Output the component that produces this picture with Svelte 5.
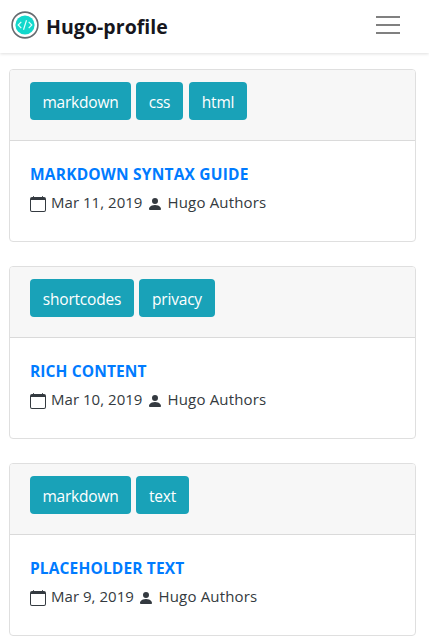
<script>
  const posts = [
    {
      title: 'MARKDOWN SYNTAX GUIDE',
      titleSpacing: 0.2,
      date: 'Mar 11, 2019',
      dateWidth: 92,
      tags: [['markdown', 101], ['css', 47], ['html', 58]]
    },
    {
      title: 'RICH CONTENT',
      titleSpacing: 0.12,
      date: 'Mar 10, 2019',
      dateWidth: 92,
      tags: [['shortcodes', 104], ['privacy', 76]]
    },
    {
      title: 'PLACEHOLDER TEXT',
      titleSpacing: 0.14,
      date: 'Mar 9, 2019',
      dateWidth: 83,
      tags: [['markdown', 101], ['text', 53]]
    }
  ];
</script>

<nav>
  <a class="brand" href="#home">
    <svg width="28" height="28" viewBox="0 0 28 28" aria-hidden="true">
      <circle cx="14" cy="14" r="12.9" fill="#fff" stroke="#666b70" stroke-width="1.6" />
      <circle cx="14" cy="14" r="9.6" fill="#12d8cc" />
      <path d="M10.3 10.9 7.2 14l3.1 3.1M17.7 10.9l3.1 3.1-3.1 3.1M15.5 9.2l-3 9.6" fill="none" stroke="#e4fffc" stroke-width="1.2" />
    </svg>
    <span>Hugo-profile</span>
  </a>
  <button class="toggler" aria-label="Menu"><i></i><i></i><i></i></button>
</nav>

<main>
  {#each posts as post}
    <article>
      <header>
        {#each post.tags as [name, width]}
          <a class="tag" href="#tag" style:width="{width}px">{name}</a>
        {/each}
      </header>
      <section>
        <h2 style:letter-spacing="{post.titleSpacing}px">{post.title}</h2>
        <p>
          <svg class="cal" width="16" height="16" viewBox="0 0 16 16" fill="#343a40" aria-hidden="true">
            <path d="M3.5 0a.5.5 0 0 1 .5.5V1h8V.5a.5.5 0 0 1 1 0V1h1a2 2 0 0 1 2 2v11a2 2 0 0 1-2 2H2a2 2 0 0 1-2-2V3a2 2 0 0 1 2-2h1V.5a.5.5 0 0 1 .5-.5zM1 4v10a1 1 0 0 0 1 1h12a1 1 0 0 0 1-1V4H1z" />
          </svg>
          <span class="date" style:width="{post.dateWidth}px">{post.date}</span>
          <svg class="user" width="16" height="16" viewBox="0 0 16 16" fill="#343a40" aria-hidden="true">
            <path d="M3 14s-1 0-1-1 1-4 6-4 6 3 6 4-1 1-1 1H3zm5-6a3 3 0 1 0 0-6 3 3 0 0 0 0 6z" />
          </svg>
          <span class="author">Hugo Authors</span>
        </p>
      </section>
    </article>
  {/each}
</main>

<style>
  :global(body) {
    background: #fff;
    font-family: 'Segoe UI', 'Open Sans', 'Noto Sans', sans-serif;
    overflow: hidden;
  }
  nav {
    box-sizing: border-box;
    height: 53px;
    padding: 0 29px 2px 11px;
    display: flex;
    align-items: center;
    justify-content: space-between;
    box-shadow: 0 1px 3px rgba(0, 0, 0, 0.13);
  }
  .brand {
    display: flex;
    align-items: center;
    gap: 7px;
    color: #16161d;
    text-decoration: none;
    font-size: 19.5px;
    line-height: 28px;
    font-weight: 700;
    white-space: nowrap;
  }
  .brand svg {
    margin-bottom: 1px;
  }
  .brand span {
    padding-top: 3px;
    letter-spacing: 0.05px;
  }
  .toggler {
    width: 24px;
    margin-bottom: 1px;
    padding: 0;
    border: 0;
    background: none;
    display: flex;
    flex-direction: column;
    gap: 6px;
  }
  .toggler i {
    height: 2px;
    background: #808080;
  }
  main {
    padding: 16px 13px 0 9px;
    display: flex;
    flex-direction: column;
    gap: 24px;
  }
  article {
    box-sizing: border-box;
    height: 173px;
    border: 1px solid #dfdfdf;
    border-radius: 4px;
    overflow: hidden;
  }
  header {
    box-sizing: border-box;
    height: 71px;
    padding: 12px 20px;
    display: flex;
    gap: 5px;
    background: #f7f7f7;
    border-bottom: 1px solid #dadada;
  }
  .tag {
    height: 38px;
    line-height: 40px;
    border-radius: 4px;
    background: #19a2b8;
    color: #fff;
    font-size: 15.5px;
    letter-spacing: -0.2px;
    text-align: center;
    text-decoration: none;
  }
  .tag:nth-child(3) {
    margin-left: 1px;
  }
  section {
    padding: 21px 20px 0;
  }
  h2 {
    margin: 0;
    font-size: 15.5px;
    line-height: 24px;
    font-weight: 700;
    color: #007bff;
    white-space: nowrap;
  }
  p {
    margin: 4px 0 0;
    display: flex;
    align-items: center;
    height: 24px;
    font-size: 15px;
    color: #343a40;
    white-space: nowrap;
  }
  .cal {
    margin: 4px 5px 0 0;
  }
  .user {
    margin: 4px 4.5px 0 4px;
  }
  .date {
    letter-spacing: 0.03px;
  }
  .author {
    letter-spacing: 0.17px;
  }
</style>
